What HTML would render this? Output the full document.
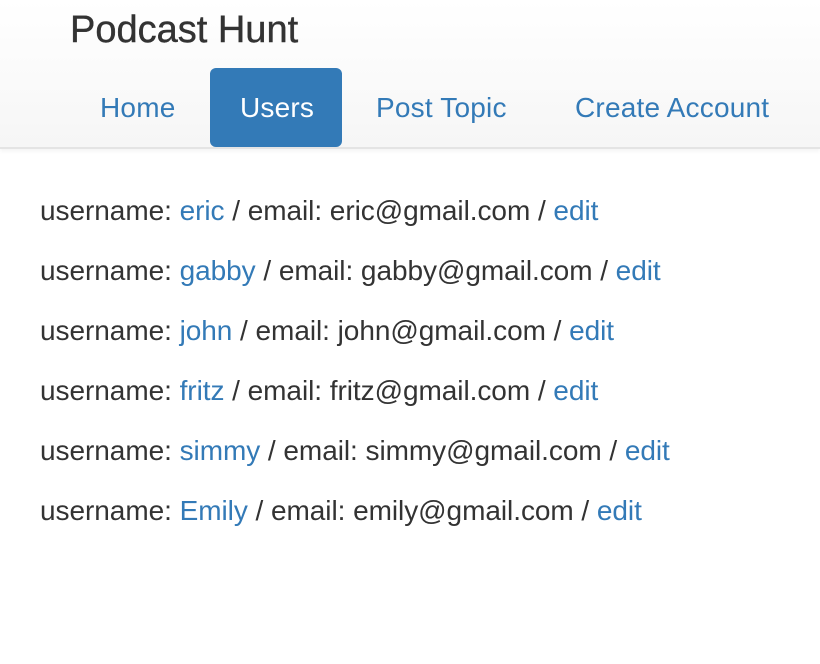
<!DOCTYPE html>
<html><head><style>
body{margin:0;width:820px;height:664px;background:#fff;font-family:"Liberation Sans",Arial,sans-serif;color:#333;overflow:hidden}
.nav{position:absolute;left:0;top:0;width:820px;height:147px;background:linear-gradient(#fff,#f6f6f6);border-bottom:2px solid #e4e4e4;box-shadow:0 2px 4px rgba(0,0,0,.05)}
.title{position:absolute;left:70px;top:9px;font-size:38px;line-height:42px;color:#333;-webkit-text-stroke:0.4px #333}
.item{position:absolute;top:68px;height:79px;line-height:80px;font-size:28px;color:#337ab7;padding:0 30px;border-radius:6px;white-space:nowrap;letter-spacing:0.2px}
.act{background:#337ab7;color:#fff}
.row{position:absolute;left:40px;font-size:28px;line-height:32px;white-space:nowrap;letter-spacing:-0.05px}
a{color:#337ab7;text-decoration:none}
</style></head><body>
<div class="nav">
<div class="title">Podcast Hunt</div>
<div class="item" style="left:70px">Home</div>
<div class="item act" style="left:210px;width:72px">Users</div>
<div class="item" style="left:346px">Post Topic</div>
<div class="item" style="left:545px">Create Account</div>
</div>
<div class="row" style="top:195px">username: <a>eric</a> / email: eric@gmail.com / <a>edit</a></div>
<div class="row" style="top:255px">username: <a>gabby</a> / email: gabby@gmail.com / <a>edit</a></div>
<div class="row" style="top:315px">username: <a>john</a> / email: john@gmail.com / <a>edit</a></div>
<div class="row" style="top:375px">username: <a>fritz</a> / email: fritz@gmail.com / <a>edit</a></div>
<div class="row" style="top:435px">username: <a>simmy</a> / email: simmy@gmail.com / <a>edit</a></div>
<div class="row" style="top:495px">username: <a>Emily</a> / email: emily@gmail.com / <a>edit</a></div>
</body></html>
